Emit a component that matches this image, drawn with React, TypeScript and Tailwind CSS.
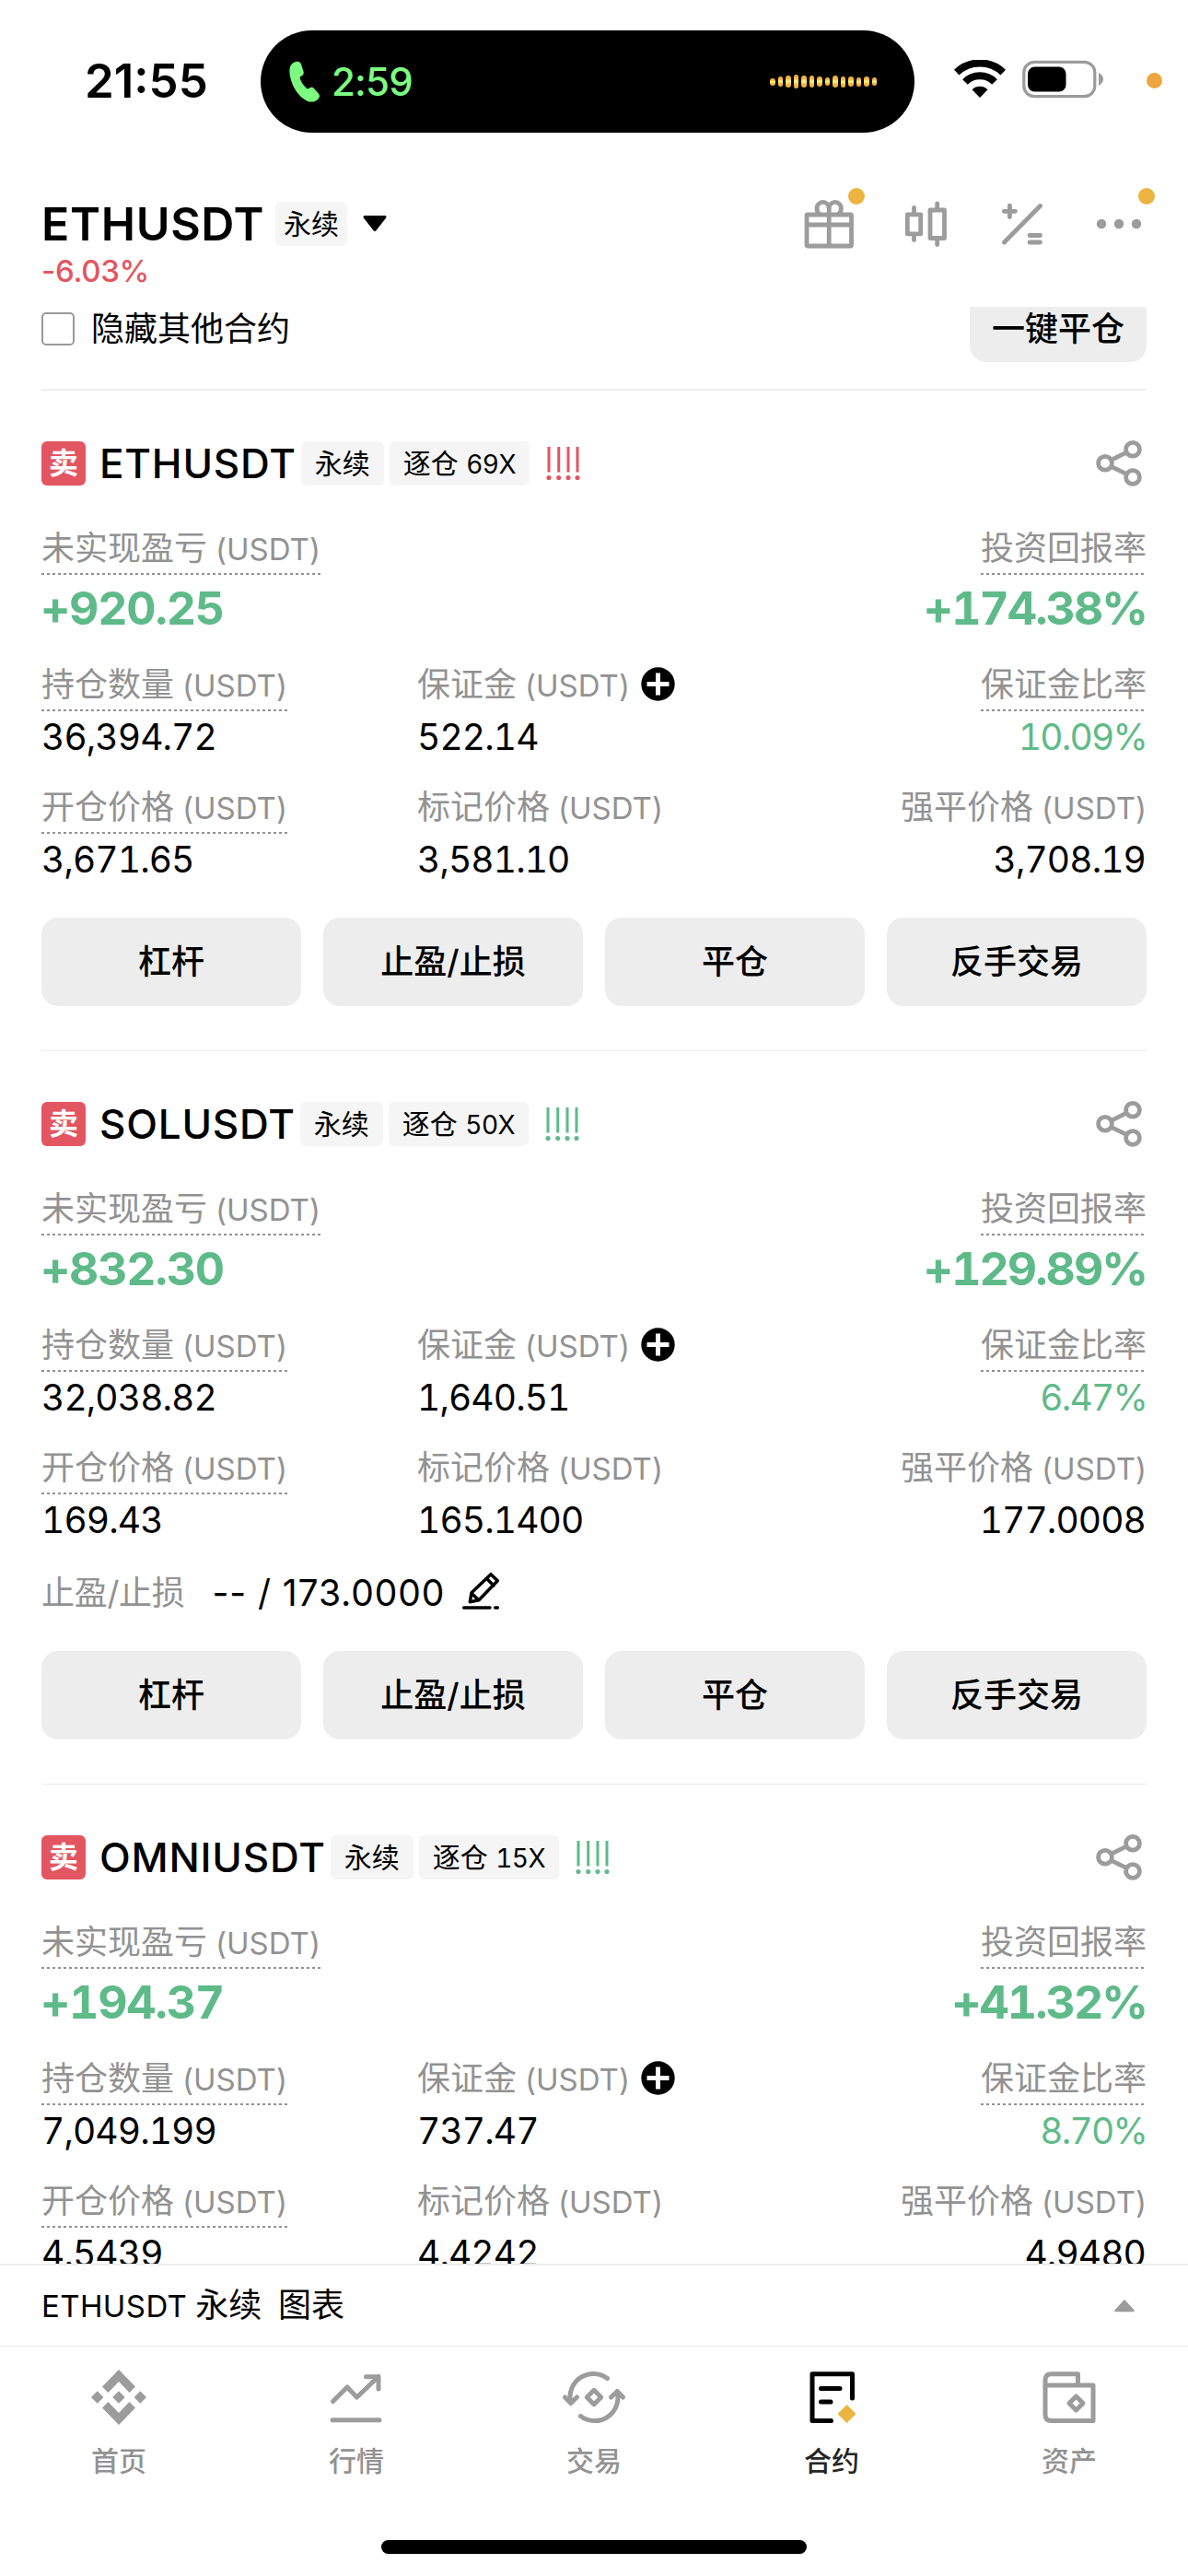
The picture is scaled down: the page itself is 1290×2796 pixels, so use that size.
import type { ReactNode } from "react";
import clsx from "clsx";

interface Position {
  symbol: string;
  leverage: string;
  signal: "red" | "green";
  pnl: string;
  roi: string;
  size: string;
  margin: string;
  marginRatio: string;
  entryPrice: string;
  markPrice: string;
  liqPrice: string;
  tpSl?: string;
}

const positions: Position[] = [
  {
    symbol: "ETHUSDT",
    leverage: "69X",
    signal: "red",
    pnl: "+920.25",
    roi: "+174.38%",
    size: "36,394.72",
    margin: "522.14",
    marginRatio: "10.09%",
    entryPrice: "3,671.65",
    markPrice: "3,581.10",
    liqPrice: "3,708.19",
  },
  {
    symbol: "SOLUSDT",
    leverage: "50X",
    signal: "green",
    pnl: "+832.30",
    roi: "+129.89%",
    size: "32,038.82",
    margin: "1,640.51",
    marginRatio: "6.47%",
    entryPrice: "169.43",
    markPrice: "165.1400",
    liqPrice: "177.0008",
    tpSl: "-- / 173.0000",
  },
  {
    symbol: "OMNIUSDT",
    leverage: "15X",
    signal: "green",
    pnl: "+194.37",
    roi: "+41.32%",
    size: "7,049.199",
    margin: "737.47",
    marginRatio: "8.70%",
    entryPrice: "4.5439",
    markPrice: "4.4242",
    liqPrice: "4.9480",
  },
];

const actions = ["杠杆", "止盈/止损", "平仓", "反手交易"];

const waveform = [8, 11, 13.5, 15, 13, 13.5, 11, 9.5, 13, 12, 11, 10, 11, 9];

const StatusBar = () => (
  <div className="flex h-[177px] shrink-0 pt-[33px]">
    <div className="w-[283px] pl-[92px] text-[51px] font-semibold leading-[110px]">21:55</div>
    <div className="flex h-[111px] w-[710px] items-center rounded-full bg-black pl-[31px] pr-[41px]">
      <svg className="h-[46px] w-[34px]" viewBox="30 24 102 138" fill="#7dfb80">
        <path d="M52 27C62 25 68 30 70 38L77 60C78 67 76 70 71 73C65 76 64 79 66 84C70 95 78 105 86 113C89 116 91 116 94 114L99 111C104 109 108 110 111 114L126 131C130 136 130 141 126 146C117 157 103 161 89 155C62 143 40 110 33 75C28 48 34 31 52 27Z" />
      </svg>
      <span className="ml-[12px] text-[42px] font-medium leading-none tracking-[-0.8px] text-[#7dfb80]">2:59</span>
      <div className="ml-auto flex items-center gap-[3px]">
        {waveform.map((h, i) => (
          <span
            key={i}
            className="w-[5.5px] rounded-full bg-linear-to-b from-[#efb440] from-25% via-[#fff47a] via-50% to-[#efb440] to-75%"
            style={{ height: h }}
          />
        ))}
      </div>
    </div>
    <svg className="ml-[43px] mt-[32px] h-[42px] w-[56px]" viewBox="0 0 56 42">
      <path d="M2.7 13.6a36.5 36.5 0 0 1 50.6 0" fill="none" stroke="#000" strokeWidth="8" />
      <path d="M12 24a22.5 22.5 0 0 1 32 0" fill="none" stroke="#000" strokeWidth="8" />
      <path d="M19.5 32.2a12.2 12.2 0 0 1 17 0L28 41Z" />
    </svg>
    <svg className="ml-[18px] mt-[32px] h-[42px] w-[90px]" viewBox="0 0 90 42">
      <rect x="1.8" y="2.3" width="77" height="37.4" rx="11.5" fill="none" stroke="#9b9b9b" strokeWidth="3.2" />
      <rect x="6" y="7.5" width="41.5" height="27" rx="7.5" />
      <path d="M83 14c2.8 1.5 5 4 5 7s-2.2 5.5-5 7z" fill="#9b9b9b" />
    </svg>
    <span className="ml-[45px] mt-[46px] size-[17px] rounded-full bg-[#f0a63e]" />
  </div>
);

const Tag = ({ className, children }: { className?: string; children: ReactNode }) => (
  <span className={clsx("h-[48px] whitespace-nowrap rounded-md bg-[#f5f5f5] text-[30px] leading-[48px]", className)}>
    {children}
  </span>
);

const Dot = ({ className }: { className: string }) => (
  <span className={clsx("absolute size-[18px] rounded-full bg-[#ecb541]", className)} />
);

const Header = () => (
  <header className="flex h-[156px] shrink-0 justify-between px-[45px] pt-[36px]">
    <div>
      <div className="flex h-[60px] items-center">
        <h1 className="w-[254px] text-[50px] font-semibold leading-[60px] tracking-[0.7px]">ETHUSDT</h1>
        <Tag className="px-[9px]">永续</Tag>
        <svg className="ml-[16px] h-[20px] w-[28px]" viewBox="0 0 28 20">
          <path d="M3 2.5H25L14 16.5Z" stroke="#000" strokeWidth="3" strokeLinejoin="round" />
        </svg>
      </div>
      <p className="mt-[3px] text-[33px] font-medium leading-[36px] tracking-[-0.3px] text-[#e35561]">-6.03%</p>
    </div>
    <div className="flex gap-[45px]">
      <div className="relative size-[60px]">
        <svg viewBox="0 0 60 60" fill="none" stroke="#9c9c9c" strokeWidth="4.8">
          <rect x="6" y="20" width="48.5" height="34" rx="1" />
          <path d="M6 31H54M30.2 18V54" />
          <path d="M30.2 19.5V13a6.6 6.6 0 1 0-13.2 0c0 3 1 5 3 6.5M30.2 13a6.6 6.6 0 1 1 13.2 0c0 3-1 5-3 6.5" />
        </svg>
        <Dot className="-right-[9px] -top-[9px]" />
      </div>
      <svg className="size-[60px]" viewBox="0 0 60 60" fill="none" stroke="#9c9c9c" strokeWidth="4.8" strokeLinecap="round" strokeLinejoin="round">
        <rect x="10.3" y="19.8" width="14.4" height="21" />
        <path d="M17.5 12.5V19M17.5 42V47.5" />
        <rect x="35" y="15" width="15.5" height="30.5" />
        <path d="M42.7 8V14M42.7 46V52.5" />
      </svg>
      <svg className="size-[60px]" viewBox="0 0 60 60" fill="none" stroke="#9c9c9c" strokeWidth="4.8" strokeLinecap="round">
        <path d="M10.5 50L49.5 10.5M10.2 16.3H22.5M16.4 10.2V22.5M38 42.5H49.5M38 50H49.5" />
      </svg>
      <div className="relative size-[60px]">
        <svg viewBox="0 0 60 60" fill="#9c9c9c">
          <circle cx="11" cy="30" r="5.2" />
          <circle cx="30" cy="30" r="5.2" />
          <circle cx="49" cy="30" r="5.2" />
        </svg>
        <Dot className="-right-[9px] -top-[9px]" />
      </div>
    </div>
  </header>
);

const ShareIcon = () => (
  <svg className="-my-[6px] ml-auto size-[60px]" viewBox="0 0 60 60" fill="none" stroke="#9c9c9c" strokeWidth="4.8">
    <circle cx="45" cy="14.7" r="7.4" />
    <circle cx="15" cy="29.8" r="7.4" />
    <circle cx="45" cy="45" r="7.4" />
    <path d="M21.5 26.3L38.5 17.9M21.5 33.3L38.5 41.7" />
  </svg>
);

const PencilIcon = () => (
  <svg className="ml-[11px] size-[60px]" viewBox="0 0 180 180" fill="none" stroke="#000" strokeWidth="10.5" strokeLinecap="round" strokeLinejoin="round">
    <path d="M117 29L139 50L78 113L49 119L54 89ZM103 43L126 66M54 91L77 113M29 138H114M131 138H139" />
  </svg>
);

const Field = ({
  label,
  unit,
  underline,
  align,
  extra,
  children,
}: {
  label: string;
  unit?: boolean;
  underline?: boolean;
  align?: "right";
  extra?: ReactNode;
  children: ReactNode;
}) => (
  <div className={clsx("flex flex-col", align === "right" ? "items-end" : "items-start")}>
    <div className="flex h-[54px] items-start">
      <div className="whitespace-nowrap text-[36px] leading-[50px] text-[#929292]">
        {label}
        {unit && <span className="ml-[9px] text-[33px] leading-none">(USDT)</span>}
        {underline && (
          <div className="mt-[2px] h-[2px] bg-[repeating-linear-gradient(90deg,#929292_0_3px,transparent_3px_6px)]" />
        )}
      </div>
      {extra}
    </div>
    {children}
  </div>
);

const Value = ({ green, children }: { green?: boolean; children: string }) => (
  <p
    className={clsx(
      "mt-[8px] text-[39px] leading-[40px] tabular-nums",
      green ? "tracking-[-1.8px] text-[#5fba89]" : "mr-[1px] tracking-[-0.9px]",
    )}
  >
    {children}
  </p>
);

const Profit = ({ className, children }: { className: string; children: string }) => (
  <p className={clsx("mt-[11px] text-[50px] font-bold leading-[50px] tabular-nums text-[#5fba89]", className)}>
    {children}
  </p>
);

const PositionCard = ({ position: p }: { position: Position }) => (
  <section className="border-b border-[#ebebeb] pb-[48px] pt-[55px]">
    <div className="flex h-[48px] items-center">
      <span className="size-[48px] rounded-md bg-[#e35561] text-center text-[32px] font-bold leading-[47px] text-white">
        卖
      </span>
      <h2 className="ml-[15px] text-[44px] font-medium leading-[48px] tracking-[0.8px]">{p.symbol}</h2>
      <Tag className="ml-[5px] px-[15px]">永续</Tag>
      <Tag className="ml-[6px] px-[15px]">
        逐仓 <span className="text-[28px] leading-none tracking-[-0.5px] tabular-nums">{p.leverage}</span>
      </Tag>
      <svg
        className={clsx("ml-[17px] h-[36px] w-[38px]", p.signal === "red" ? "text-[#e35561]" : "text-[#5fba89]")}
        viewBox="0 0 38 36"
        fill="none"
        stroke="currentColor"
        strokeWidth="3"
      >
        <path d="M4 0V27.5M14.7 0V27.5M25 0V27.5M35 0V27.5" />
        <path d="M4 33.5h.01M14.7 33.5h.01M25 33.5h.01M35 33.5h.01" strokeWidth="5.2" strokeLinecap="round" />
      </svg>
      <ShareIcon />
    </div>

    <div className="mt-[43px] flex justify-between">
      <Field label="未实现盈亏" unit underline>
        <Profit className="-ml-[1px] tracking-[-1.2px]">{p.pnl}</Profit>
      </Field>
      <Field label="投资回报率" underline align="right">
        <Profit className="tracking-[-2px]">{p.roi}</Profit>
      </Field>
    </div>

    <div className="mt-[33px] grid grid-cols-[408px_1fr_auto] gap-y-[31px]">
      <Field label="持仓数量" unit underline>
        <Value>{p.size}</Value>
      </Field>
      <Field
        label="保证金"
        unit
        extra={
          <svg className="ml-[12px] mt-[6px] size-[37px]" viewBox="0 0 37 37">
            <circle cx="18.5" cy="18.5" r="18.2" />
            <path d="M6.5 18.5H30.5M18.5 6.5V30.5" stroke="#fff" strokeWidth="5" />
          </svg>
        }
      >
        <Value>{p.margin}</Value>
      </Field>
      <Field label="保证金比率" underline align="right">
        <Value green>{p.marginRatio}</Value>
      </Field>
      <Field label="开仓价格" unit underline>
        <Value>{p.entryPrice}</Value>
      </Field>
      <Field label="标记价格" unit>
        <Value>{p.markPrice}</Value>
      </Field>
      <Field label="强平价格" unit align="right">
        <Value>{p.liqPrice}</Value>
      </Field>
    </div>

    {p.tpSl && (
      <div className="-mb-[3px] mt-[35px] flex h-[47px] items-center">
        <span className="text-[36px] leading-[48px] tracking-[-0.3px] text-[#929292]">止盈/止损</span>
        <span className="ml-[30px] text-[39px] leading-[48px] tracking-[0.9px]">{p.tpSl}</span>
        <PencilIcon />
      </div>
    )}

    <div className="mt-[43px] grid grid-cols-4 gap-6">
      {actions.map((a) => (
        <button key={a} className="h-[96px] rounded-[18px] bg-[#ededed] text-[36px] font-medium leading-[48px]">
          {a}
        </button>
      ))}
    </div>
  </section>
);

const tabs = [
  {
    label: "首页",
    icon: (
      <g fill="#9c9c9c" stroke="none">
        <path d="M30 0L48 18.5L41.5 25L30 13L18.5 25L12 18.5Z" />
        <path d="M30 60L48 41.5L41.5 35L30 47L18.5 35L12 41.5Z" />
        <path d="M30 23.3L36.7 30L30 36.7L23.3 30ZM6.7 23.3L13.4 30L6.7 36.7L0 30ZM53.3 23.3L60 30L53.3 36.7L46.6 30Z" />
      </g>
    ),
  },
  {
    label: "行情",
    icon: <path d="M4.5 34.5L20 19L30.5 30L54 7.5M40.5 7.7H54V21M4 54.7H55" />,
  },
  {
    label: "交易",
    icon: (
      <>
        <path d="M44.5 9.5A25.3 25.3 0 0 0 4.8 36M-1.5 30L4.8 36.5L11.5 30" />
        <path d="M15.5 50.5A25.3 25.3 0 0 0 55.2 24M48.5 30L55.2 23.5L61.5 30" />
        <path d="M30 22.3L37.7 30L30 37.7L22.3 30Z" />
      </>
    ),
  },
  {
    label: "合约",
    active: true,
    icon: (
      <>
        <path d="M52.5 31V4.8H9V55.5H29.5M18.5 20.5H39M18.5 35H29" />
        <path d="M46.5 38L56.5 48L46.5 58L36.5 48Z" fill="#ecb541" stroke="none" />
      </>
    ),
  },
  {
    label: "资产",
    icon: (
      <>
        <path d="M4 17V11.5Q4 4.8 10.5 4.8H39.5V17M4 17H56V55.5H10.5Q4 55.5 4 49Z" />
        <path d="M37.5 29L45 36.5L37.5 44L30 36.5Z" />
      </>
    ),
  },
];

const TabBar = () => (
  <nav className="grid h-[250px] shrink-0 grid-cols-5 grid-rows-[auto_1fr] border-t border-[#ebebeb] pt-[25px]">
    {tabs.map((t) => (
      <div key={t.label} className="flex flex-col items-center">
        <svg
          className="size-[60px] overflow-visible"
          viewBox="0 0 60 60"
          fill="none"
          stroke={t.active ? "#000" : "#9c9c9c"}
          strokeWidth="5"
          strokeLinecap="round"
          strokeLinejoin="round"
        >
          {t.icon}
        </svg>
        <span className={clsx("mt-[19px] text-[30px] font-medium leading-[40px]", t.active ? "text-[#262626]" : "text-[#929292]")}>
          {t.label}
        </span>
      </div>
    ))}
    <div className="col-span-5 mb-[24px] h-[15px] w-[462px] self-end justify-self-center rounded-full bg-black" />
  </nav>
);

export default function App() {
  return (
    <div className="flex h-[2796px] w-[1290px] flex-col overflow-hidden bg-white font-['Inter','Noto_Sans_CJK_SC',sans-serif] text-black">
      <StatusBar />
      <Header />
      <main className="min-h-0 flex-1 overflow-hidden px-[45px]">
        <div className="-mt-[13px] flex h-[104px] items-start justify-between border-b-2 border-[#ededed]">
          <label className="flex h-[73px] items-center text-[36px] leading-[48px]">
            <span className="mr-[18px] size-[36px] rounded-[5px] border-2 border-[#999]" />
            隐藏其他合约
          </label>
          <button className="h-[73px] w-[192px] rounded-[18px] bg-[#ededed] text-[36px] font-medium leading-[48px]">
            一键平仓
          </button>
        </div>
        {positions.map((p) => (
          <PositionCard key={p.symbol} position={p} />
        ))}
      </main>
      <div className="flex h-[89px] shrink-0 items-center justify-between border-t-2 border-[#ededed] px-[45px] text-[36px] leading-[48px]">
        <span className="mb-[2px] whitespace-pre [word-spacing:-1.2px]">
          <span className="text-[33px] leading-none tracking-[0.4px]">ETHUSDT</span> 永续  图表
        </span>
        <svg className="mr-[12px] h-[15px] w-[24px]" viewBox="0 0 24 15">
          <path d="M12 2.5L21.5 13H2.5Z" fill="#9c9c9c" stroke="#9c9c9c" strokeWidth="2.5" strokeLinejoin="round" />
        </svg>
      </div>
      <TabBar />
    </div>
  );
}
